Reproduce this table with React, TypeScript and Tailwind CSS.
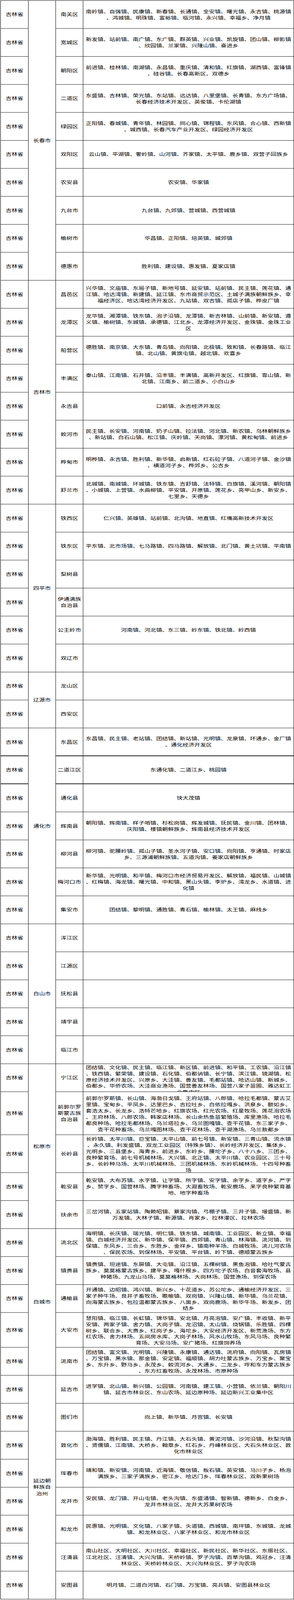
import React from "react";

type Row = { d: string; t: string; h?: string; thick?: boolean; top?: string };
type Group = { c: string; rows: Row[] };

const groups: Group[] = [
  {
    c: "长春市",
    rows: [
      { d: "南关区", t: "南岭镇、自强镇、民康镇、新春镇、长通镇、全安镇、曙光镇、永吉镇、桃源镇、鸿城镇、明珠镇、富裕镇、临河镇、永兴镇、幸福乡、净月镇" },
      { d: "宽城区", t: "新发镇、站前镇、南广镇、东广镇、群英镇、兴业镇、凯旋镇、团山镇、柳影镇、欣园镇、兰家镇、兴隆山镇、奋进乡" },
      { d: "朝阳区", t: "前进镇、桂林镇、南湖镇、永昌镇、重庆镇、清和镇、红旗镇、湖西镇、富锋镇、硅谷镇、长春高新区、双德乡" },
      { d: "二道区", t: "东盛镇、吉林镇、荣光镇、东站镇、远达镇、八里堡镇、长青镇、东方广场镇、长春经济技术开发区、英俊镇、卡伦湖镇" },
      { d: "绿园区", t: "正阳镇、春城镇、青年镇、林园镇、同心镇、锦程镇、东风镇、合心镇、西新镇、城西镇、长春汽车产业开发区、绿园经济开发区" },
      { d: "双阳区", t: "云山镇、平湖镇、奢岭镇、山河镇、齐家镇、太平镇、鹿乡镇、双营子回族乡" },
      { d: "农安县", t: "农安镇、华家镇" },
      { d: "九台市", t: "九台镇、九郊镇、营城镇、西营城镇" },
      { d: "榆树市", t: "华昌镇、正阳镇、培英镇、城郊镇" },
      { d: "德惠市", t: "胜利镇、建设镇、惠发镇、夏家店镇" },
    ],
  },
  {
    c: "吉林市",
    rows: [
      { d: "昌邑区", t: "兴华镇、文庙镇、东局子镇、新地号镇、延安镇、站前镇、民主镇、莲花镇、通江镇、哈达湾镇、新建镇、延江镇、东市商贸示范区、土城子满族朝鲜族乡、幸福经济区、哈达湾经济开发区、九站镇、双吉镇、孤店子镇、桦皮厂镇" },
      { d: "龙潭区", t: "龙华镇、湘潭镇、铁东镇、泡子沿镇、龙潭镇、新吉林镇、山前镇、新安镇、遵义镇、榆树镇、东城镇、承德镇、江北乡、龙潭经济开发区、金珠镇、金珠工业区" },
      { d: "船营区", t: "德胜镇、南京镇、大东镇、青岛镇、向阳镇、北极镇、致和镇、长春路镇、临江镇、北山镇、黄旗屯镇、越北镇、欢喜乡" },
      { d: "丰满区", t: "泰山镇、江南镇、石井镇、沿丰镇、丰满镇、高新开发区、红旗镇、靠山镇、新北镇、江南乡、前二道乡、小白山乡" },
      { d: "永吉县", t: "口前镇、永吉经济开发区" },
      { d: "蛟河市", t: "民主镇、长安镇、河南镇、奶子山镇、拉法镇、河北镇、新农镇、乌林朝鲜族乡、新站镇、白石山镇、松江镇、庆岭镇、天岗镇、漂河镇、黄松甸镇、前进乡" },
      { d: "桦甸市", t: "明桦镇、永吉镇、胜利镇、新华镇、启新镇、红石砬子镇、八道河子镇、金沙镇、横道河子乡、桦郊乡、公吉乡" },
      { d: "舒兰市", t: "北城镇、南城镇、环城镇、铁东镇、吉舒镇、法特镇、白旗镇、溪河镇、朝阳镇、小城镇、上营镇、水曲柳镇、平安镇、开原镇、莲花乡、亮甲山乡、新安乡、七里乡、天德乡" },
    ],
  },
  {
    c: "四平市",
    rows: [
      { d: "铁西区", t: "仁兴镇、英雄镇、站前镇、北沟镇、地直镇、红嘴高新技术开发区" },
      { d: "铁东区", t: "平东镇、北市场镇、七马路镇、四马路镇、解放镇、北门镇、黄土坑镇、平南镇" },
      { d: "梨树县", t: "" },
      { d: "伊通满族自治县", t: "" },
      { d: "公主岭市", t: "河南镇、河北镇、东三镇、岭东镇、铁北镇、岭西镇" },
      { d: "双辽市", t: "" },
    ],
  },
  {
    c: "辽源市",
    rows: [
      { d: "龙山区", t: "" },
      { d: "西安区", t: "" },
    ],
  },
  {
    c: "通化市",
    rows: [
      { d: "东昌区", t: "东昌镇、民主镇、老站镇、团结镇、新站镇、光明镇、龙泉镇、环通乡、金厂镇、通化经济开发区", thick: true },
      { d: "二道江区", t: "东通化镇、二道江乡、桃园镇", thick: true },
      { d: "通化县", t: "快大茂镇" },
      { d: "辉南县", t: "朝阳镇、辉南镇、样子哨镇、杉松岗镇、辉发城镇、抚民镇、金川镇、团林镇、庆阳镇、楼镇朝鲜族乡、辉南县经济技术开发区" },
      { d: "柳河县", t: "柳河镇、驼腰岭镇、孤山子镇、圣水河子镇、安口镇、向阳镇、亨通镇、时家店乡、三源浦朝鲜族镇、五道沟镇、姜家店朝鲜族乡" },
      { d: "梅河口市", t: "新华镇、光明镇、和平镇、梅河口市经济贸易开发区、解放镇、福民镇、山城镇、红梅镇、海龙镇、曙光镇、中和镇、黑山头镇、李炉乡、湾龙乡、水道镇、进化镇" },
      { d: "集安市", t: "团结镇、黎明镇、通胜镇、青石镇、榆林镇、太王镇、麻线乡" },
    ],
  },
  {
    c: "白山市",
    rows: [
      { d: "浑江区", t: "" },
      { d: "江源区", t: "" },
      { d: "抚松县", t: "" },
      { d: "靖宇县", t: "" },
      { d: "临江市", t: "" },
    ],
  },
  {
    c: "松原市",
    rows: [
      { d: "宁江区", top: "pt-[1px]", t: "团结镇、文化镇、民主镇、临江镇、新区镇、前进镇、和平镇、工农镇、沿江镇、铁西镇、繁荣镇、建设镇、石化镇、伯都讷镇、长宁镇、滨江镇、镜湖镇、松原经济技术开发区、兴原乡、大洼镇、善友镇、毛都站镇、哈达山镇、新城乡、伯都乡、华侨农场、大洼商业渔场、国营善友林场、国营八家子苗圃、雅达虹工业集中区" },
      { d: "前郭尔罗斯蒙古族自治县", h: "h-[126px]", top: "pt-[10px]", t: "前郭尔罗斯镇、长山镇、海渤日戈镇、王府站镇、八郎镇、哈拉毛都镇、蒙古艾里镇、宝甸乡、平凤乡、达里巴乡、吉拉吐乡、白依拉嘎乡、洪泉乡、额如乡、套浩太乡、长龙乡、浩特芒哈乡、红旗农场、红光农场、红星牧场、莲花泡农场、王府林场、八郎农场、韩家店林场、长山余热鱼苗繁殖场、库里渔场、哈拉毛都良种场、哈拉毛都林场、乌兰塔拉乡、乌兰图嘎镇、查干花镇、东三家子乡、查干花种畜场、乌兰嘎图林场、查干花林场、查干湖渔场、乌兰敖都乡" },
      { d: "长岭县", h: "h-[111px]", top: "pt-[3px]", t: "长岭镇、太平川镇、巨宝镇、太平山镇、前七号镇、新安镇、三青山镇、流水镇、永久镇、利发盛镇、双龙工业园区（特殊乡镇）、长岭经济开发区、集体乡、光明乡、三县堡乡、海青乡、前进乡、东岭乡、腰坨子乡、八十八乡、三团乡、良种繁育场、前七号机械林场、大兴镇、北正镇、太平川镇、农业园区、三十号乡、长岭种马场、太平川机械林场、三团机械林场、东岭机械林场、十四号种畜场" },
      { d: "乾安县", t: "乾安镇、大布苏镇、水字镇、让字镇、所字镇、安字镇、余字乡、道字乡、严字乡、赞字乡、国营林场、腾字种畜场、大遐畜牧场、乾安鹿场、来字良种繁育基地、地字种畜场" },
      { d: "扶余市", t: "三岔河镇、五家站镇、陶赖昭镇、蔡家沟镇、弓棚子镇、三井子镇、增盛镇、新万发镇、大林子镇、新源镇、肖家乡、拉林灌区、拉林农场" },
    ],
  },
  {
    c: "白城市",
    rows: [
      { d: "洮北区", t: "海明镇、长庆镇、瑞光镇、明仁镇、铁东镇、城南镇、工业园区、新立镇、幸福镇、白城经济开发区、新华镇、保平镇、西郊镇、青山镇、林海镇、洮河镇、到保镇、东风乡、三合乡、东胜乡、金祥乡、镇南种羊场、白城牧场、洮儿河农场、保民农场、到保林场、平安镇、平台镇、岭下镇、德顺蒙古族乡" },
      { d: "镇赉县", t: "镇赉镇、坦途镇、东屏镇、大屯镇、沿江镇、五棵树镇、黑鱼泡镇、哈吐气蒙古族乡、莫莫格蒙古族乡、建平乡、嘎什根乡、四方坨子农场、白音套海牧场、县种猪场、九龙山马场、莫莫格林场、大岗林场、国营渔场、到保农场" },
      { d: "通榆县", t: "开通镇、边昭镇、鸿兴镇、新兴乡、十花道乡、苏公坨乡、通榆经济开发区、三家子种牛场、良井子畜牧场、瞻榆镇、双岗镇、兴隆山镇、新华镇、乌兰花镇、向海蒙古族乡、包拉温都蒙古族乡、八面乡、双岗鹿场、新华牛场、新发乡、团结乡" },
      { d: "大安市", h: "h-[102px]", top: "pt-[7px]", t: "慧阳镇、临江镇、长虹镇、锦华镇、安北镇、月亮泡镇、安广镇、丰收镇、新平安镇、两家子镇、舍力镇、大岗子镇、龙沼镇、太山镇、烧锅镇、乐胜镇、四棵树乡、联合乡、大赉乡、红岗子乡、海坨乡、大安经济开发区、新荒渔场、东方红农场、舍力林场、五间房水库、大岗子林场、风水山牧场、东风马场、良种繁育场、大安马场、安广猪场、红旗饲养场" },
      { d: "洮南市", t: "团结镇、富文镇、光明镇、兴隆镇、永康镇、通达镇、洮府镇、向阳镇、瓦房镇、万宝镇、黑水镇、那金镇、安定镇、福顺镇、胡力吐蒙古族乡、万宝乡、聚宝乡、东升乡、野马乡、永茂乡、蛟流河乡、大通乡、二龙乡、呼和车力蒙古族乡、东方红畜牧场、永茂林场、市原种场" },
    ],
  },
  {
    c: "延边朝鲜族自治州",
    rows: [
      { d: "延吉市", t: "进学镇、北山镇、新兴镇、公园镇、河南镇、建工镇、小营镇、依兰镇、朝阳川镇、延吉市林业区、东山农场、延边原种场、延边新兴工业集中区" },
      { d: "图们市", t: "向上镇、新华镇、月宫镇、长安镇" },
      { d: "敦化市", t: "渤海镇、胜利镇、民主镇、丹江镇、大石头镇、黄泥河镇、沙河沿镇、秋梨沟镇、贤儒镇、江南镇、大桥乡、翰章乡、红石乡、丹峰林业区、大石头林业区、敦化市林业区" },
      { d: "珲春市", t: "靖和镇、新安镇、河南镇、近海镇、敬信镇、板石镇、英安镇、马川子乡、杨泡满族乡、三家子满族乡、密江乡、哈达门乡、珲春林业区、双新果树场" },
      { d: "龙井市", t: "安民镇、龙门镇、开山屯镇、老头沟镇、东盛涌镇、智新镇、德新乡、白金乡、龙井市林业区、龙井大苏果树农场" },
      { d: "和龙市", t: "民惠镇、光明镇、文化镇、八家子镇、头道镇、西城镇、南坪镇、东城镇、龙城镇、和龙林业区、八家子林业区、和龙市林业区" },
      { d: "汪清县", t: "南山社区、大明社区、大川社区、幸福社区、新民社区、新华社区、东振社区、江北社区、汪清镇、大兴沟镇、天桥岭镇、罗子沟镇、百草沟镇、鸡冠乡、汪清林业区、天桥岭林业区、大兴沟林业区、罗子沟农场" },
      { d: "安图县", t: "明月镇、二道白河镇、石门镇、万宝镇、亮兵镇、安图县林业区" },
    ],
  },
];

const PAGE_H = 4689;

function cellH(r: Row) {
  return r.h ?? "h-[82px]";
}
function cellB(r: Row) {
  return r.thick ? "border-b-2" : "border-b";
}

export default function App() {
  // The window may be shorter than the requested frame; fit the whole sheet into it.
  const vh = typeof window !== "undefined" ? window.innerHeight : PAGE_H;
  const s = vh > 0 && vh < PAGE_H ? vh / PAGE_H : 1;

  return (
    <div className="w-[752px] overflow-hidden bg-white" style={{ height: PAGE_H * s }}>
      <div
        className="h-[4689px] w-[752px] origin-top bg-white pt-px pl-px font-['Noto_Sans_CJK_SC','Liberation_Sans',sans-serif] text-[15px] leading-[20.8px] text-black"
        style={{ transform: `scaleY(${s})` }}
      >
        <div className="flex w-[751px] flex-col border-l border-t border-black">
          {groups.map((g) => (
            <div key={g.c} className="flex w-[750px] shrink-0">
              <div className="flex w-[71px] shrink-0 flex-col">
                {g.rows.map((r) => (
                  <div
                    key={r.d}
                    className={`${cellH(r)} ${cellB(r)} flex shrink-0 items-center justify-center overflow-hidden border-r border-black`}
                  >
                    <span className="[transform:scaleY(0.875)]">吉林省</span>
                  </div>
                ))}
              </div>
              <div className="flex w-[70px] shrink-0 items-center justify-center overflow-hidden border-b border-r border-black px-[5px] text-center">
                <div className="[transform:scaleY(0.875)]">{g.c}</div>
              </div>
              <div className="flex w-[609px] shrink-0 flex-col">
                {g.rows.map((r) => (
                  <div key={r.d} className={`${cellH(r)} flex shrink-0`}>
                    <div
                      className={`${cellB(r)} flex w-[70px] shrink-0 items-center justify-center overflow-hidden border-r border-black px-[4px] text-center`}
                    >
                      <div className="[transform:scaleY(0.875)]">{r.d}</div>
                    </div>
                    <div
                      className={`${cellB(r)} ${r.top ?? ""} flex w-[539px] shrink-0 flex-col overflow-hidden border-r border-black px-[6px]`}
                    >
                      <div
                        className={`${r.top ? "origin-top" : "origin-center my-auto"} text-center [line-break:anywhere] [transform:scaleY(0.875)]`}
                      >
                        {r.t}
                      </div>
                    </div>
                  </div>
                ))}
              </div>
            </div>
          ))}
        </div>
      </div>
    </div>
  );
}
